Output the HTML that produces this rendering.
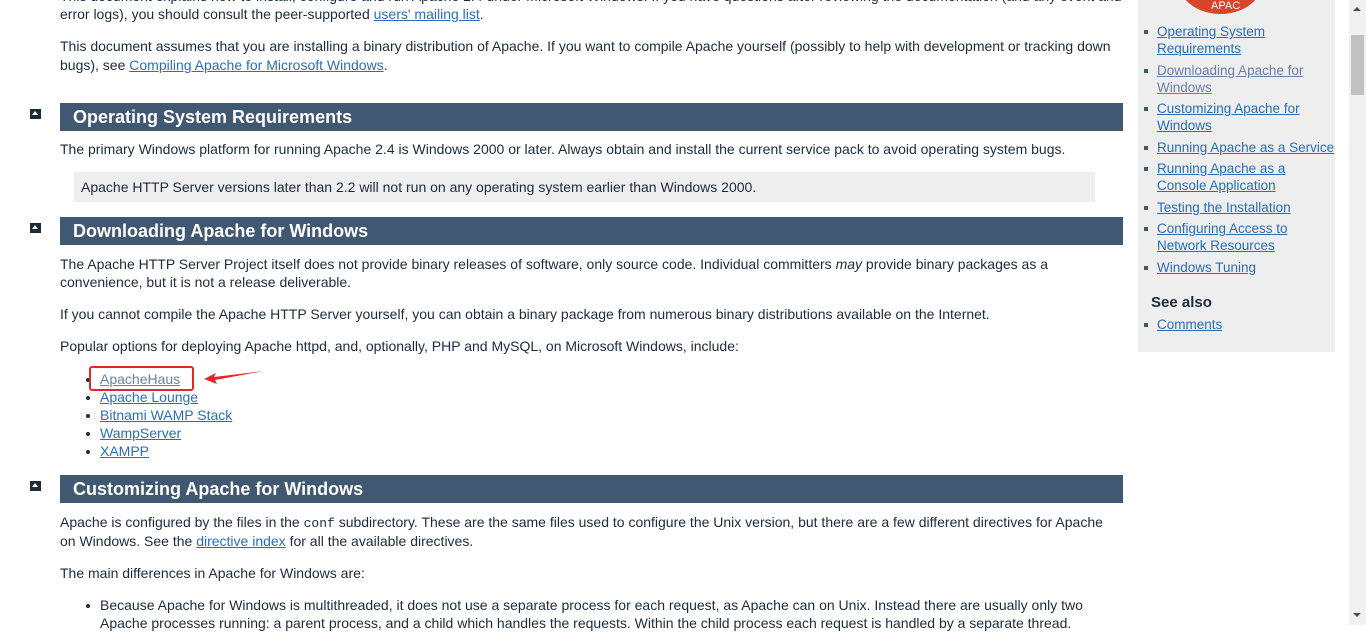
<!DOCTYPE html>
<html><head><meta charset="utf-8"><style>
body{margin:0;width:1366px;height:625px;overflow:hidden;background:#fff;font-family:"Liberation Sans",Arial,sans-serif;font-size:14px;color:#1e2b3c;position:relative}
a{color:#2a6ebb;text-decoration:underline}
.a{position:absolute;white-space:nowrap;line-height:18.5px}
.h{position:absolute;left:60px;width:1063px;height:28px;background:#405871;color:#fff;font-weight:bold;font-size:18px;line-height:28px;padding-left:13px;box-sizing:border-box}
.up{position:absolute;left:30px;width:11px;height:10px;background:#1e2b3c}
.up:after{content:"";position:absolute;left:2px;top:2px;border-left:3.5px solid transparent;border-right:3.5px solid transparent;border-bottom:4px solid #fff}
.note{position:absolute;left:74px;top:172px;width:1021px;height:30px;background:#eee;padding-left:7px;line-height:30px;box-sizing:border-box}
.side{position:absolute;left:1138px;top:0;width:197px;height:352px;background:#eee;font-size:13.5px}
.side ul{margin:0;padding:0;list-style:none;position:absolute;left:0;top:23px}
.side li{position:relative;padding-left:19px;line-height:17px;margin-bottom:4.5px;box-sizing:border-box;width:190px}
.side li:before{content:"";position:absolute;left:6px;top:7px;width:4px;height:4px;background:#405871}
.bul{position:absolute;width:4px;height:4px;border-radius:2px;background:#1e2b3c}
.sb{position:absolute;left:1349px;top:0;width:17px;height:625px;background:#f1f1f1}
</style></head><body>
<div class="a" style="left:60px;top:-13px">This document explains how to install, configure and run Apache 2.4 under Microsoft Windows. If you have questions after reviewing the documentation (and any event and</div>
<div class="a" style="left:60px;top:5px">error logs), you should consult the peer-supported <a>users' mailing list</a>.</div>
<div class="a" style="left:60px;top:37px">This document assumes that you are installing a binary distribution of Apache. If you want to compile Apache yourself (possibly to help with development or tracking down</div>
<div class="a" style="left:60px;top:56px">bugs), see <a>Compiling Apache for Microsoft Windows</a>.</div>

<div class="up" style="top:109px"></div><div class="h" style="top:103px">Operating System Requirements</div>
<div class="a" style="left:60px;top:140px">The primary Windows platform for running Apache 2.4 is Windows 2000 or later. Always obtain and install the current service pack to avoid operating system bugs.</div>
<div class="note">Apache HTTP Server versions later than 2.2 will not run on any operating system earlier than Windows 2000.</div>

<div class="up" style="top:223px"></div><div class="h" style="top:217px">Downloading Apache for Windows</div>
<div class="a" style="left:60px;top:255px">The Apache HTTP Server Project itself does not provide binary releases of software, only source code. Individual committers <i>may</i> provide binary packages as a</div>
<div class="a" style="left:60px;top:273px">convenience, but it is not a release deliverable.</div>
<div class="a" style="left:60px;top:305px">If you cannot compile the Apache HTTP Server yourself, you can obtain a binary package from numerous binary distributions available on the Internet.</div>
<div class="a" style="left:60px;top:337px">Popular options for deploying Apache httpd, and, optionally, PHP and MySQL, on Microsoft Windows, include:</div>
<div class="bul" style="left:86px;top:378px"></div><div class="a" style="left:100px;top:370px"><a style="color:#6b7fa8">ApacheHaus</a></div>
<div class="bul" style="left:86px;top:396px"></div><div class="a" style="left:100px;top:388px"><a>Apache Lounge</a></div>
<div class="bul" style="left:86px;top:414px"></div><div class="a" style="left:100px;top:406px"><a>Bitnami WAMP Stack</a></div>
<div class="bul" style="left:86px;top:432px"></div><div class="a" style="left:100px;top:424px"><a>WampServer</a></div>
<div class="bul" style="left:86px;top:450px"></div><div class="a" style="left:100px;top:442px"><a>XAMPP</a></div>
<div style="position:absolute;left:89px;top:366px;width:101px;height:21px;border:2px solid #e8232a;border-radius:3px"></div>
<svg style="position:absolute;left:200px;top:368px" width="70" height="20"><path d="M4 11 L16 5 L14 9 L64 3 L15 12 L17 16 Z" fill="#e8232a"/></svg>

<div class="up" style="top:481px"></div><div class="h" style="top:475px">Customizing Apache for Windows</div>
<div class="a" style="left:60px;top:513px">Apache is configured by the files in the <span style="font-family:'Liberation Mono',monospace;font-size:13px">conf</span> subdirectory. These are the same files used to configure the Unix version, but there are a few different directives for Apache</div>
<div class="a" style="left:60px;top:532px">on Windows. See the <a>directive index</a> for all the available directives.</div>
<div class="a" style="left:60px;top:564px">The main differences in Apache for Windows are:</div>
<div class="bul" style="left:86px;top:604px"></div>
<div class="a" style="left:100px;top:596px">Because Apache for Windows is multithreaded, it does not use a separate process for each request, as Apache can on Unix. Instead there are usually only two</div>
<div class="a" style="left:100px;top:614px">Apache processes running: a parent process, and a child which handles the requests. Within the child process each request is handled by a separate thread.</div>

<div class="side">
<div style="position:absolute;left:40px;top:-52px;width:85px;height:66px;border-radius:50%;background:#d9452b"></div>
<div style="position:absolute;left:73px;top:0;color:#fff;font-size:11px;line-height:12px">APAC</div>
<ul>
<li><a>Operating System<br>Requirements</a></li>
<li><a style="color:#6b7fa8">Downloading Apache for<br>Windows</a></li>
<li><a>Customizing Apache for<br>Windows</a></li>
<li style="white-space:nowrap"><a>Running Apache as a Service</a></li>
<li><a>Running Apache as a<br>Console Application</a></li>
<li><a>Testing the Installation</a></li>
<li><a>Configuring Access to<br>Network Resources</a></li>
<li><a>Windows Tuning</a></li>
</ul>
<div style="position:absolute;left:13px;top:294px;font-weight:bold;font-size:15px">See also</div>
<ul style="top:316px"><li><a>Comments</a></li></ul>
</div>
<div class="sb"><div style="position:absolute;left:2px;top:35px;width:13px;height:60px;background:#c1c1c1"></div>
<div style="position:absolute;left:4px;top:7px;border-left:4px solid transparent;border-right:4px solid transparent;border-bottom:4px solid #505050"></div>
<div style="position:absolute;left:4px;top:613px;border-left:4px solid transparent;border-right:4px solid transparent;border-top:4px solid #505050"></div></div>
</body></html>
